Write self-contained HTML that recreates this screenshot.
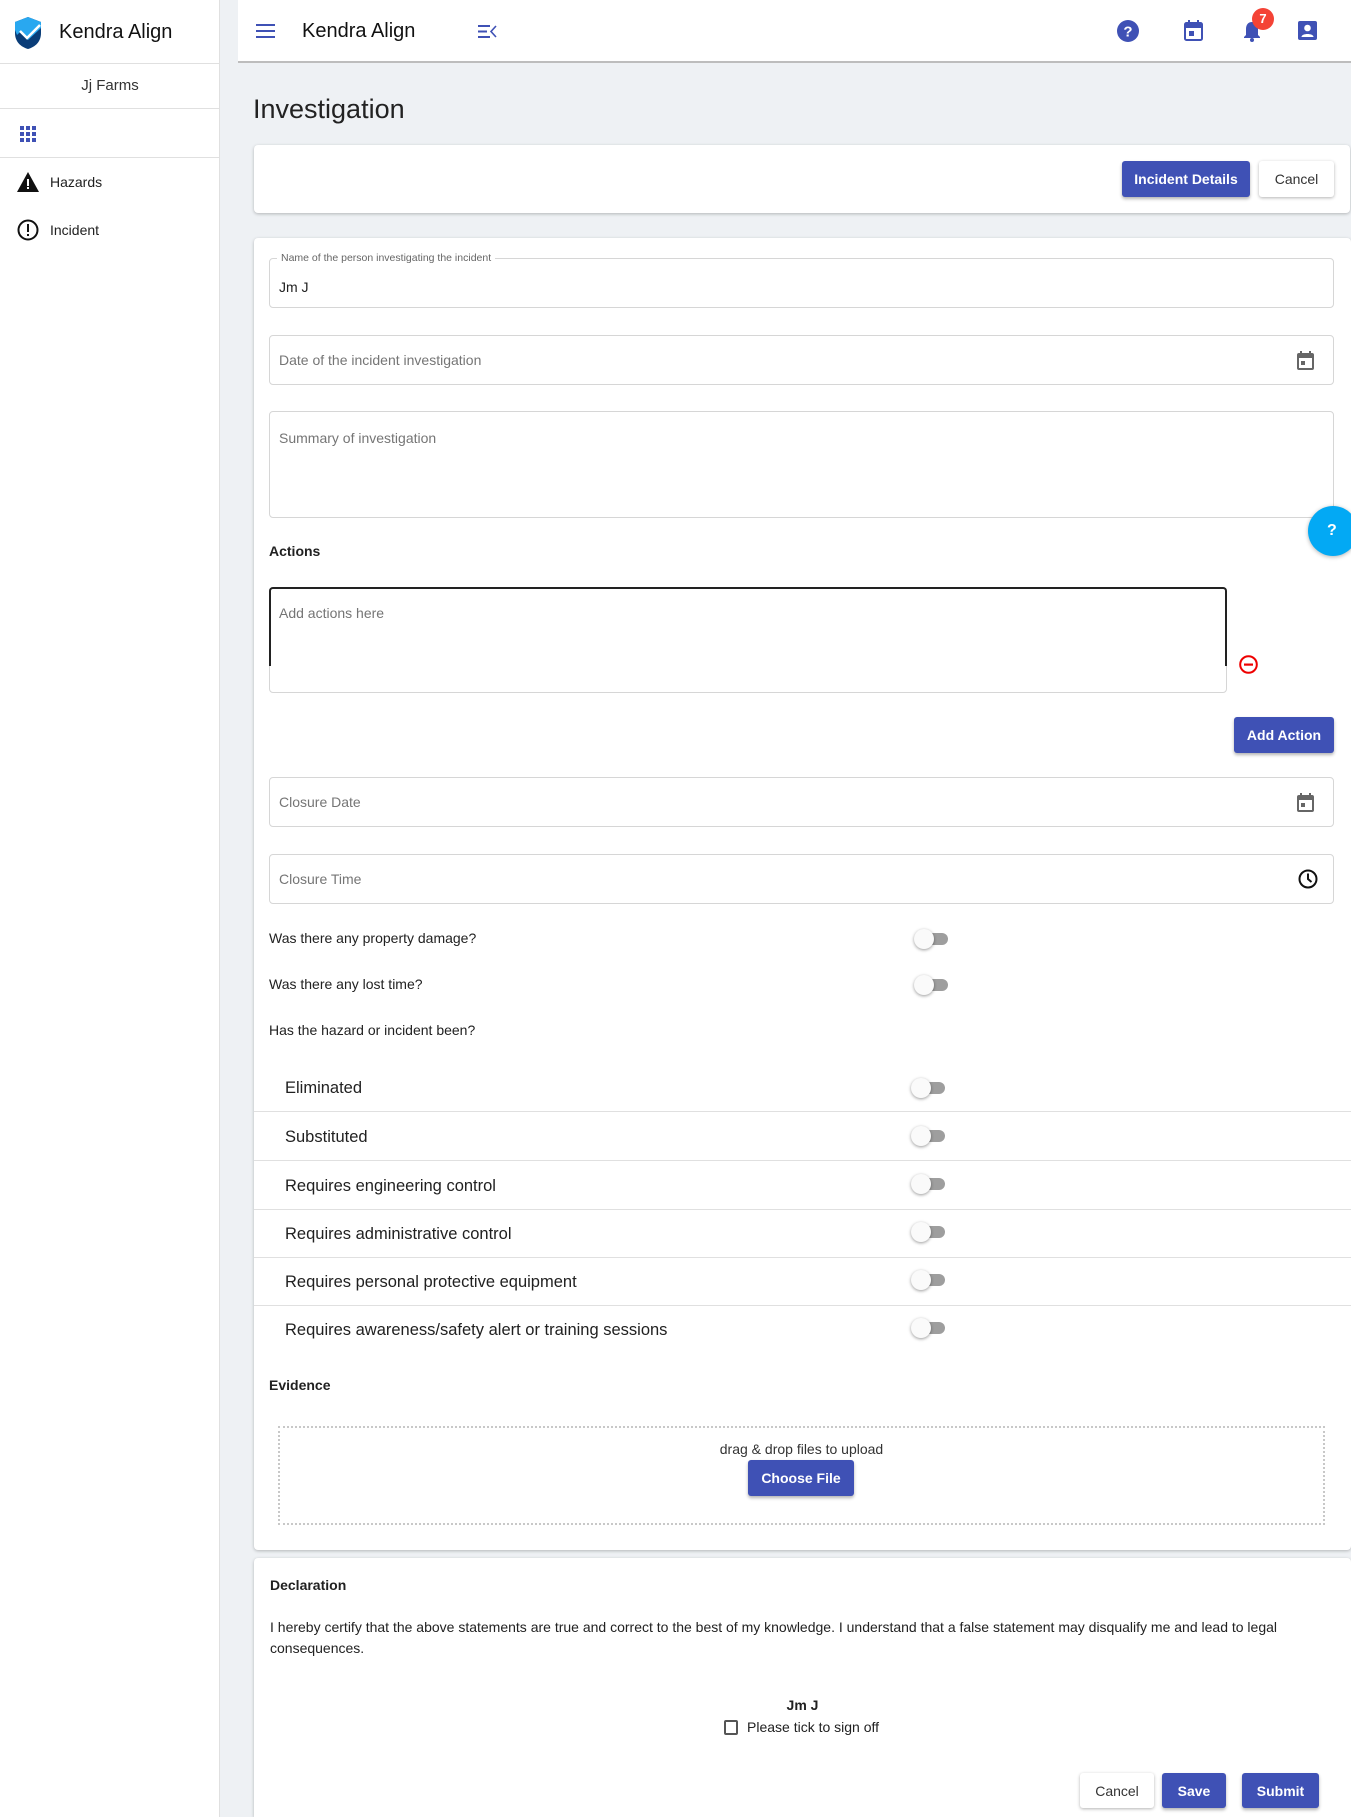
<!DOCTYPE html>
<html><head><meta charset="utf-8"><style>
*{box-sizing:border-box;margin:0;padding:0}
html,body{width:1351px;height:1817px;overflow:hidden}
body{background:#eef1f4;font-family:"Liberation Sans",sans-serif;color:#212121;position:relative;font-size:14px}
.a{position:absolute}
.side{left:0;top:0;width:220px;height:1817px;background:#fff;border-right:1px solid #e0e0e0}
.hdr{left:238px;top:0;width:1113px;height:63px;background:#fff;border-bottom:2px solid #bdbdbd}
.card{background:#fff;border-radius:4px;box-shadow:0 1px 3px rgba(0,0,0,.25)}
.fld{left:269px;width:1065px;border:1px solid #d6d6d6;border-radius:4px;background:#fff}
.ph{color:#757575;font-size:14px}
.btn{background:#3f51b5;color:#fff;font-weight:bold;font-size:14px;border-radius:3px;display:flex;align-items:center;justify-content:center;box-shadow:0 2px 3px rgba(0,0,0,.3)}
.wbtn{background:#fff;color:#333;font-size:14px;border-radius:3px;display:flex;align-items:center;justify-content:center;box-shadow:0 1px 3px rgba(0,0,0,.3)}
.tg{width:34px;height:20px}
.tg:before{content:"";position:absolute;left:6px;top:4px;width:28px;height:12px;border-radius:6px;background:#9e9e9e}
.tg:after{content:"";position:absolute;left:0;top:0;width:20px;height:20px;border-radius:50%;background:#fafafa;box-shadow:0 1px 3px rgba(0,0,0,.4)}
.row{left:254px;width:1097px;height:48px;border-bottom:1px solid #e0e0e0;font-size:16.5px;padding-left:31px;line-height:48px}
.lbl{left:269px;font-size:14px}
</style></head><body>
<div class="a side">
 <svg class="a" style="left:14px;top:16px" width="28" height="34" viewBox="0 0 28 34"><path d="M14 1 L27 6 V17 C27 26 21 31 14 33 C7 31 1 26 1 17 V6Z" fill="#0a3d78"/><path d="M14 1 L27 6 V12 L14 24 L6 16 L3 19 L1 14 V6Z" fill="#29a8f0"/><path d="M6 15 L13 22 L26 9" stroke="#fff" stroke-width="2.5" fill="none"/></svg>
 <div class="a" style="left:59px;top:21px;font-size:20px;color:#111">Kendra Align</div>
 <div class="a" style="left:0;top:63px;width:220px;height:46px;border-top:1px solid #e0e0e0;border-bottom:1px solid #e0e0e0;text-align:center;line-height:44px;font-size:15px;color:#333">Jj Farms</div>
 <svg class="a" style="left:20px;top:126px" width="16" height="16"><g fill="#3f51b5"><rect x="0" y="0" width="4" height="4"/><rect x="6" y="0" width="4" height="4"/><rect x="12" y="0" width="4" height="4"/><rect x="0" y="6" width="4" height="4"/><rect x="6" y="6" width="4" height="4"/><rect x="12" y="6" width="4" height="4"/><rect x="0" y="12" width="4" height="4"/><rect x="6" y="12" width="4" height="4"/><rect x="12" y="12" width="4" height="4"/></g></svg>
 <div class="a" style="left:0;top:157px;width:220px;border-top:1px solid #e0e0e0"></div>
 <svg class="a" style="left:17px;top:172px" width="22" height="20" viewBox="0 0 22 20"><path d="M11 0 L22 20 H0Z" fill="#111"/><rect x="10" y="7" width="2" height="7" fill="#fff"/><rect x="10" y="15" width="2" height="2" fill="#fff"/></svg>
 <div class="a" style="left:50px;top:174px;font-size:14px">Hazards</div>
 <svg class="a" style="left:17px;top:219px" width="22" height="22" viewBox="0 0 22 22"><circle cx="11" cy="11" r="9.5" stroke="#111" stroke-width="2" fill="none"/><rect x="10" y="5" width="2" height="8" fill="#111"/><rect x="10" y="15" width="2" height="2" fill="#111"/></svg>
 <div class="a" style="left:50px;top:222px;font-size:14px">Incident</div>
</div>
<div class="a hdr">
 <svg class="a" style="left:18px;top:24px" width="19" height="14"><g fill="#3f51b5"><rect y="0" width="19" height="2"/><rect y="6" width="19" height="2"/><rect y="12" width="19" height="2"/></g></svg>
 <div class="a" style="left:64px;top:20px;font-size:20px;color:#111">Kendra Align</div>
 <svg class="a" style="left:240px;top:25px" width="19" height="13"><g fill="#3f51b5"><rect y="0" width="12" height="2"/><rect y="5.5" width="9" height="2"/><rect y="11" width="12" height="2"/><path d="M18 1 L13 6.5 L18 12" stroke="#3f51b5" stroke-width="1.6" fill="none"/></g></svg>
</div>
<svg class="a" style="left:1117px;top:20px" width="22" height="22" viewBox="0 0 22 22"><circle cx="11" cy="11" r="11" fill="#3f51b5"/><text x="11" y="16.5" text-anchor="middle" font-size="15" font-weight="bold" fill="#fff" font-family="Liberation Sans">?</text></svg>
<svg class="a" style="left:1184px;top:20px" width="19" height="21" viewBox="0 0 19 21"><rect x="1" y="3" width="17" height="17" rx="1.5" stroke="#3f51b5" stroke-width="2" fill="none"/><rect x="1" y="3" width="17" height="5" fill="#3f51b5"/><rect x="4" y="0" width="2" height="4" fill="#3f51b5"/><rect x="13" y="0" width="2" height="4" fill="#3f51b5"/><rect x="5" y="11" width="5" height="5" fill="#3f51b5"/></svg>
<svg class="a" style="left:1243px;top:20px" width="18" height="22" viewBox="0 0 18 22"><path d="M9 2 C5 2 3 5 3 9 V15 L1 17 V18 H17 V17 L15 15 V9 C15 5 13 2 9 2Z" fill="#3f51b5"/><circle cx="9" cy="20" r="2" fill="#3f51b5"/></svg>
<div class="a" style="left:1252px;top:8px;width:22px;height:22px;border-radius:50%;background:#f44336;color:#fff;font-weight:bold;font-size:13px;text-align:center;line-height:22px">7</div>
<svg class="a" style="left:1298px;top:21px" width="19" height="19" viewBox="0 0 19 19"><rect width="19" height="19" rx="2" fill="#3f51b5"/><circle cx="9.5" cy="7" r="3.3" fill="#fff"/><path d="M3.5 16 C3.5 12 15.5 12 15.5 16Z" fill="#fff"/></svg>

<div class="a" style="left:253px;top:94px;font-size:27px;color:#222">Investigation</div>
<div class="a card" style="left:254px;top:145px;width:1096px;height:68px"></div>
<div class="a btn" style="left:1122px;top:161px;width:128px;height:36px">Incident Details</div>
<div class="a wbtn" style="left:1259px;top:161px;width:75px;height:36px">Cancel</div>

<div class="a card" style="left:254px;top:238px;width:1097px;height:1312px"></div>
<div class="a fld" style="top:258px;height:50px"></div>
<div class="a" style="left:277px;top:252px;background:#fff;padding:0 4px;font-size:10.5px;color:#666">Name of the person investigating the incident</div>
<div class="a" style="left:279px;top:279px;font-size:14px">Jm J</div>
<div class="a fld" style="top:335px;height:50px"></div>
<div class="a ph" style="left:279px;top:352px">Date of the incident investigation</div>
<svg class="a" style="left:1297px;top:351px" width="17" height="19" viewBox="0 0 17 19"><rect x="1" y="3" width="15" height="15" rx="1" stroke="#666" stroke-width="2" fill="none"/><rect x="1" y="3" width="15" height="4" fill="#666"/><rect x="3" y="0" width="2" height="4" fill="#666"/><rect x="12" y="0" width="2" height="4" fill="#666"/><rect x="4" y="10" width="4" height="4" fill="#666"/></svg>
<div class="a fld" style="top:411px;height:107px"></div>
<div class="a ph" style="left:279px;top:430px">Summary of investigation</div>
<div class="a" style="left:1308px;top:506px;width:50px;height:50px;border-radius:50%;background:#03a9f4;box-shadow:0 1px 4px rgba(0,0,0,.3);color:#fff;font-weight:bold;font-size:16px;line-height:50px;padding-left:19px">?</div>

<div class="a lbl" style="top:543px;font-weight:bold">Actions</div>
<div class="a" style="left:269px;top:587px;width:958px;height:106px;border:1px solid #d6d6d6;border-radius:4px;background:#fff"></div>
<div class="a" style="left:269px;top:587px;width:958px;height:79px;border:2px solid #222;border-bottom:none;border-radius:4px 4px 0 0"></div>
<div class="a ph" style="left:279px;top:605px">Add actions here</div>
<svg class="a" style="left:1239px;top:655px" width="19" height="19" viewBox="0 0 19 19"><circle cx="9.5" cy="9.5" r="8.3" stroke="#e00" stroke-width="2" fill="none"/><rect x="5" y="8.5" width="9" height="2.2" fill="#e00"/></svg>
<div class="a btn" style="left:1234px;top:717px;width:100px;height:36px">Add Action</div>

<div class="a fld" style="top:777px;height:50px"></div>
<div class="a ph" style="left:279px;top:794px">Closure Date</div>
<svg class="a" style="left:1297px;top:793px" width="17" height="19" viewBox="0 0 17 19"><rect x="1" y="3" width="15" height="15" rx="1" stroke="#666" stroke-width="2" fill="none"/><rect x="1" y="3" width="15" height="4" fill="#666"/><rect x="3" y="0" width="2" height="4" fill="#666"/><rect x="12" y="0" width="2" height="4" fill="#666"/><rect x="4" y="10" width="4" height="4" fill="#666"/></svg>
<div class="a fld" style="top:854px;height:50px"></div>
<div class="a ph" style="left:279px;top:871px">Closure Time</div>
<svg class="a" style="left:1298px;top:869px" width="20" height="20" viewBox="0 0 20 20"><circle cx="10" cy="10" r="8.5" stroke="#111" stroke-width="2" fill="none"/><path d="M10 4.5 V10 L13.5 13" stroke="#111" stroke-width="2" fill="none"/></svg>

<div class="a lbl" style="top:930px">Was there any property damage?</div>
<div class="a tg" style="left:914px;top:929px"></div>
<div class="a lbl" style="top:976px">Was there any lost time?</div>
<div class="a tg" style="left:914px;top:975px"></div>
<div class="a lbl" style="top:1022px">Has the hazard or incident been?</div>

<div class="a row" style="top:1064px">Eliminated</div>
<div class="a tg" style="left:911px;top:1078px"></div>
<div class="a row" style="top:1113px">Substituted</div>
<div class="a tg" style="left:911px;top:1126px"></div>
<div class="a row" style="top:1162px">Requires engineering control</div>
<div class="a tg" style="left:911px;top:1174px"></div>
<div class="a row" style="top:1210px">Requires administrative control</div>
<div class="a tg" style="left:911px;top:1222px"></div>
<div class="a row" style="top:1258px">Requires personal protective equipment</div>
<div class="a tg" style="left:911px;top:1270px"></div>
<div class="a row" style="top:1306px;border-bottom:none">Requires awareness/safety alert or training sessions</div>
<div class="a tg" style="left:911px;top:1318px"></div>

<div class="a lbl" style="top:1377px;font-weight:bold">Evidence</div>
<div class="a" style="left:278px;top:1426px;width:1047px;height:99px;border:2px dotted #c8c8c8"></div>
<div class="a" style="left:278px;top:1441px;width:1047px;text-align:center;font-size:14px;color:#333">drag &amp; drop files to upload</div>
<div class="a btn" style="left:748px;top:1460px;width:106px;height:36px">Choose File</div>

<div class="a card" style="left:254px;top:1558px;width:1097px;height:259px;border-radius:4px 4px 0 0"></div>
<div class="a" style="left:270px;top:1577px;font-weight:bold;font-size:14px">Declaration</div>
<div class="a" style="left:270px;top:1617px;width:1060px;font-size:14px;line-height:21px;color:#222">I hereby certify that the above statements are true and correct to the best of my knowledge. I understand that a false statement may disqualify me and lead to legal consequences.</div>
<div class="a" style="left:254px;top:1697px;width:1097px;text-align:center;font-weight:bold;font-size:14px">Jm J</div>
<div class="a" style="left:724px;top:1720px;width:14px;height:15px;border:2px solid #555;border-radius:2px"></div>
<div class="a" style="left:747px;top:1719px;font-size:14px">Please tick to sign off</div>
<div class="a wbtn" style="left:1080px;top:1773px;width:74px;height:35px">Cancel</div>
<div class="a btn" style="left:1162px;top:1773px;width:64px;height:35px">Save</div>
<div class="a btn" style="left:1242px;top:1773px;width:77px;height:35px">Submit</div>
</body></html>
